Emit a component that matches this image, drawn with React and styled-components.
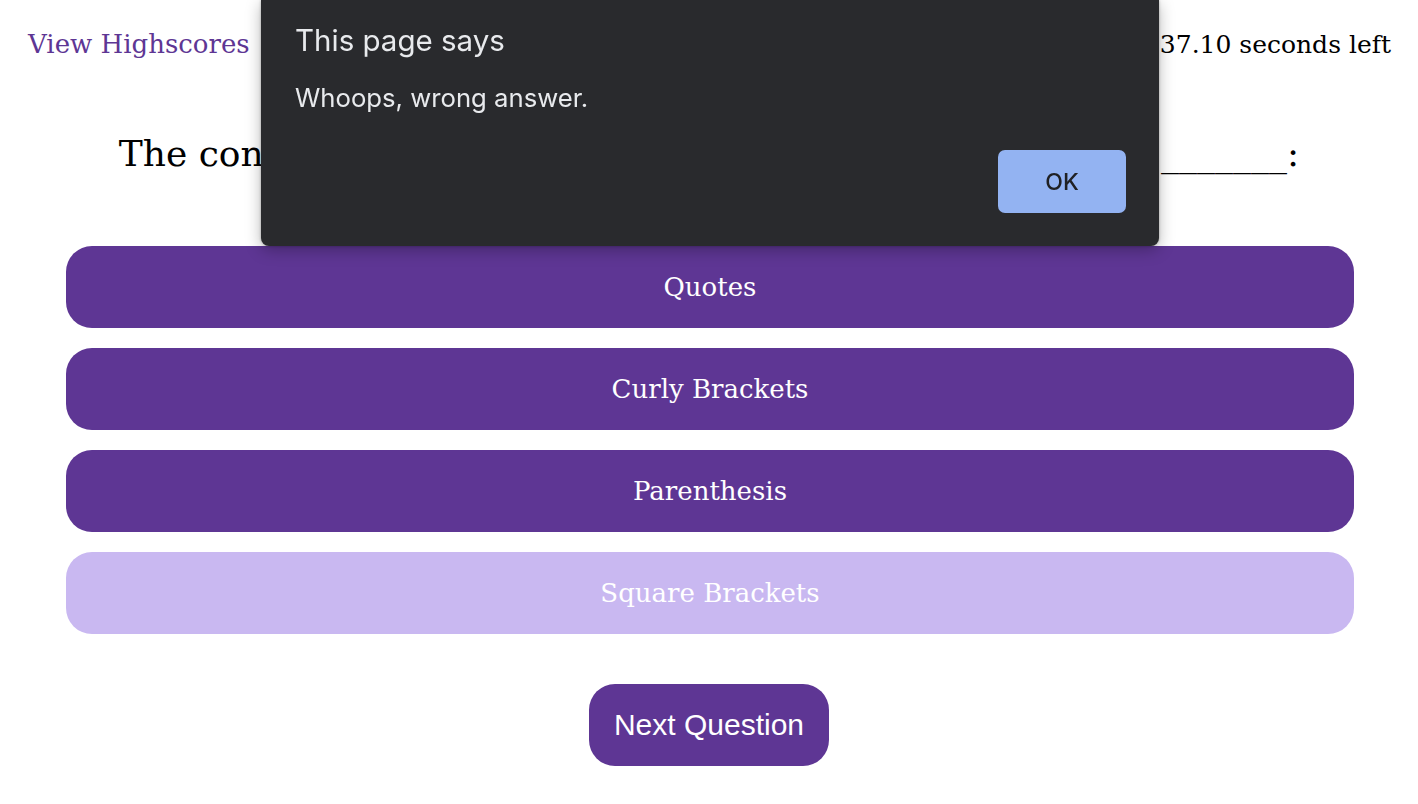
import React from "react";
import styled, { createGlobalStyle } from "styled-components";

const GlobalStyle = createGlobalStyle`
  body {
    margin: 0;
    background: #ffffff;
    font-family: "DejaVu Serif", "Liberation Serif", serif;
  }
`;

const answers = [
  { text: "Quotes", picked: false },
  { text: "Curly Brackets", picked: false },
  { text: "Parenthesis", picked: false },
  { text: "Square Brackets", picked: true },
];

const App = () => {
  return (
    <>
      <GlobalStyle />
      <Page>
        <Header>
          <HighscoreLink href="#">View Highscores</HighscoreLink>
          <Timer>37.10 seconds left</Timer>
        </Header>
        <Question>
          The condition in an if / else statement is enclosed within _______:
        </Question>
        <AnswerList>
          {answers.map((a) => (
            <AnswerButton key={a.text} $picked={a.picked}>
              {a.text}
            </AnswerButton>
          ))}
        </AnswerList>
        <NextRow>
          <NextButton>Next Question</NextButton>
        </NextRow>
      </Page>

      <Dialog>
        <DialogTitle>This page says</DialogTitle>
        <DialogMessage>Whoops, wrong answer.</DialogMessage>
        <DialogActions>
          <OkButton>OK</OkButton>
        </DialogActions>
      </Dialog>
    </>
  );
};
export default App;

const Page = styled.div`
  width: 1418px;
  height: 804px;
  overflow: hidden;
`;
const Header = styled.header`
  display: flex;
  justify-content: space-between;
  align-items: center;
  padding: 24px 27px 0 28px;
  height: 40px;
`;
const HighscoreLink = styled.a`
  color: #5e3694;
  text-decoration: none;
  font-size: 26px;
`;
const Timer = styled.div`
  color: #000;
  font-size: 25px;
`;
const Question = styled.h2`
  margin: 68px 0 0;
  text-align: center;
  font-weight: normal;
  font-size: 36px;
  line-height: 44px;
  color: #000;
  white-space: nowrap;
`;
const AnswerList = styled.div`
  display: flex;
  flex-direction: column;
  gap: 20px;
  margin: 70px 64px 0 66px;
`;
const AnswerButton = styled.button`
  height: 82px;
  border: none;
  border-radius: 26px;
  background: ${(p) => (p.$picked ? "#c9b8f1" : "#5e3694")};
  color: #ffffff;
  font-family: "DejaVu Serif", "Liberation Serif", serif;
  font-size: 26px;
  cursor: pointer;
`;
const NextRow = styled.div`
  display: flex;
  justify-content: center;
  margin-top: 50px;
`;
const NextButton = styled.button`
  width: 240px;
  height: 82px;
  border: none;
  border-radius: 26px;
  background: #5e3694;
  color: #ffffff;
  font-family: "Liberation Sans", Arial, sans-serif;
  font-size: 30px;
  cursor: pointer;
`;
const Dialog = styled.div`
  position: fixed;
  top: 0;
  left: 261px;
  width: 898px;
  height: 246px;
  box-sizing: border-box;
  padding: 21px 33px 0 34px;
  background: #292a2d;
  border-radius: 0 0 8px 8px;
  box-shadow: 0 4px 16px rgba(0, 0, 0, 0.28), 0 0 3px rgba(0, 0, 0, 0.3);
  font-family: Inter, "Noto Sans", sans-serif;
  color: #e8eaed;
  display: flex;
  flex-direction: column;
`;
const DialogTitle = styled.div`
  font-size: 29.5px;
  line-height: 38px;
`;
const DialogMessage = styled.div`
  margin-top: 23px;
  font-size: 25.7px;
  line-height: 32px;
`;
const DialogActions = styled.div`
  display: flex;
  justify-content: flex-end;
  margin-top: 36px;
`;
const OkButton = styled.button`
  width: 128px;
  height: 63px;
  border: none;
  border-radius: 7px;
  background: #93b3f2;
  color: #202124;
  font-family: Inter, "Noto Sans", sans-serif;
  font-size: 23px;
  font-weight: 500;
`;
